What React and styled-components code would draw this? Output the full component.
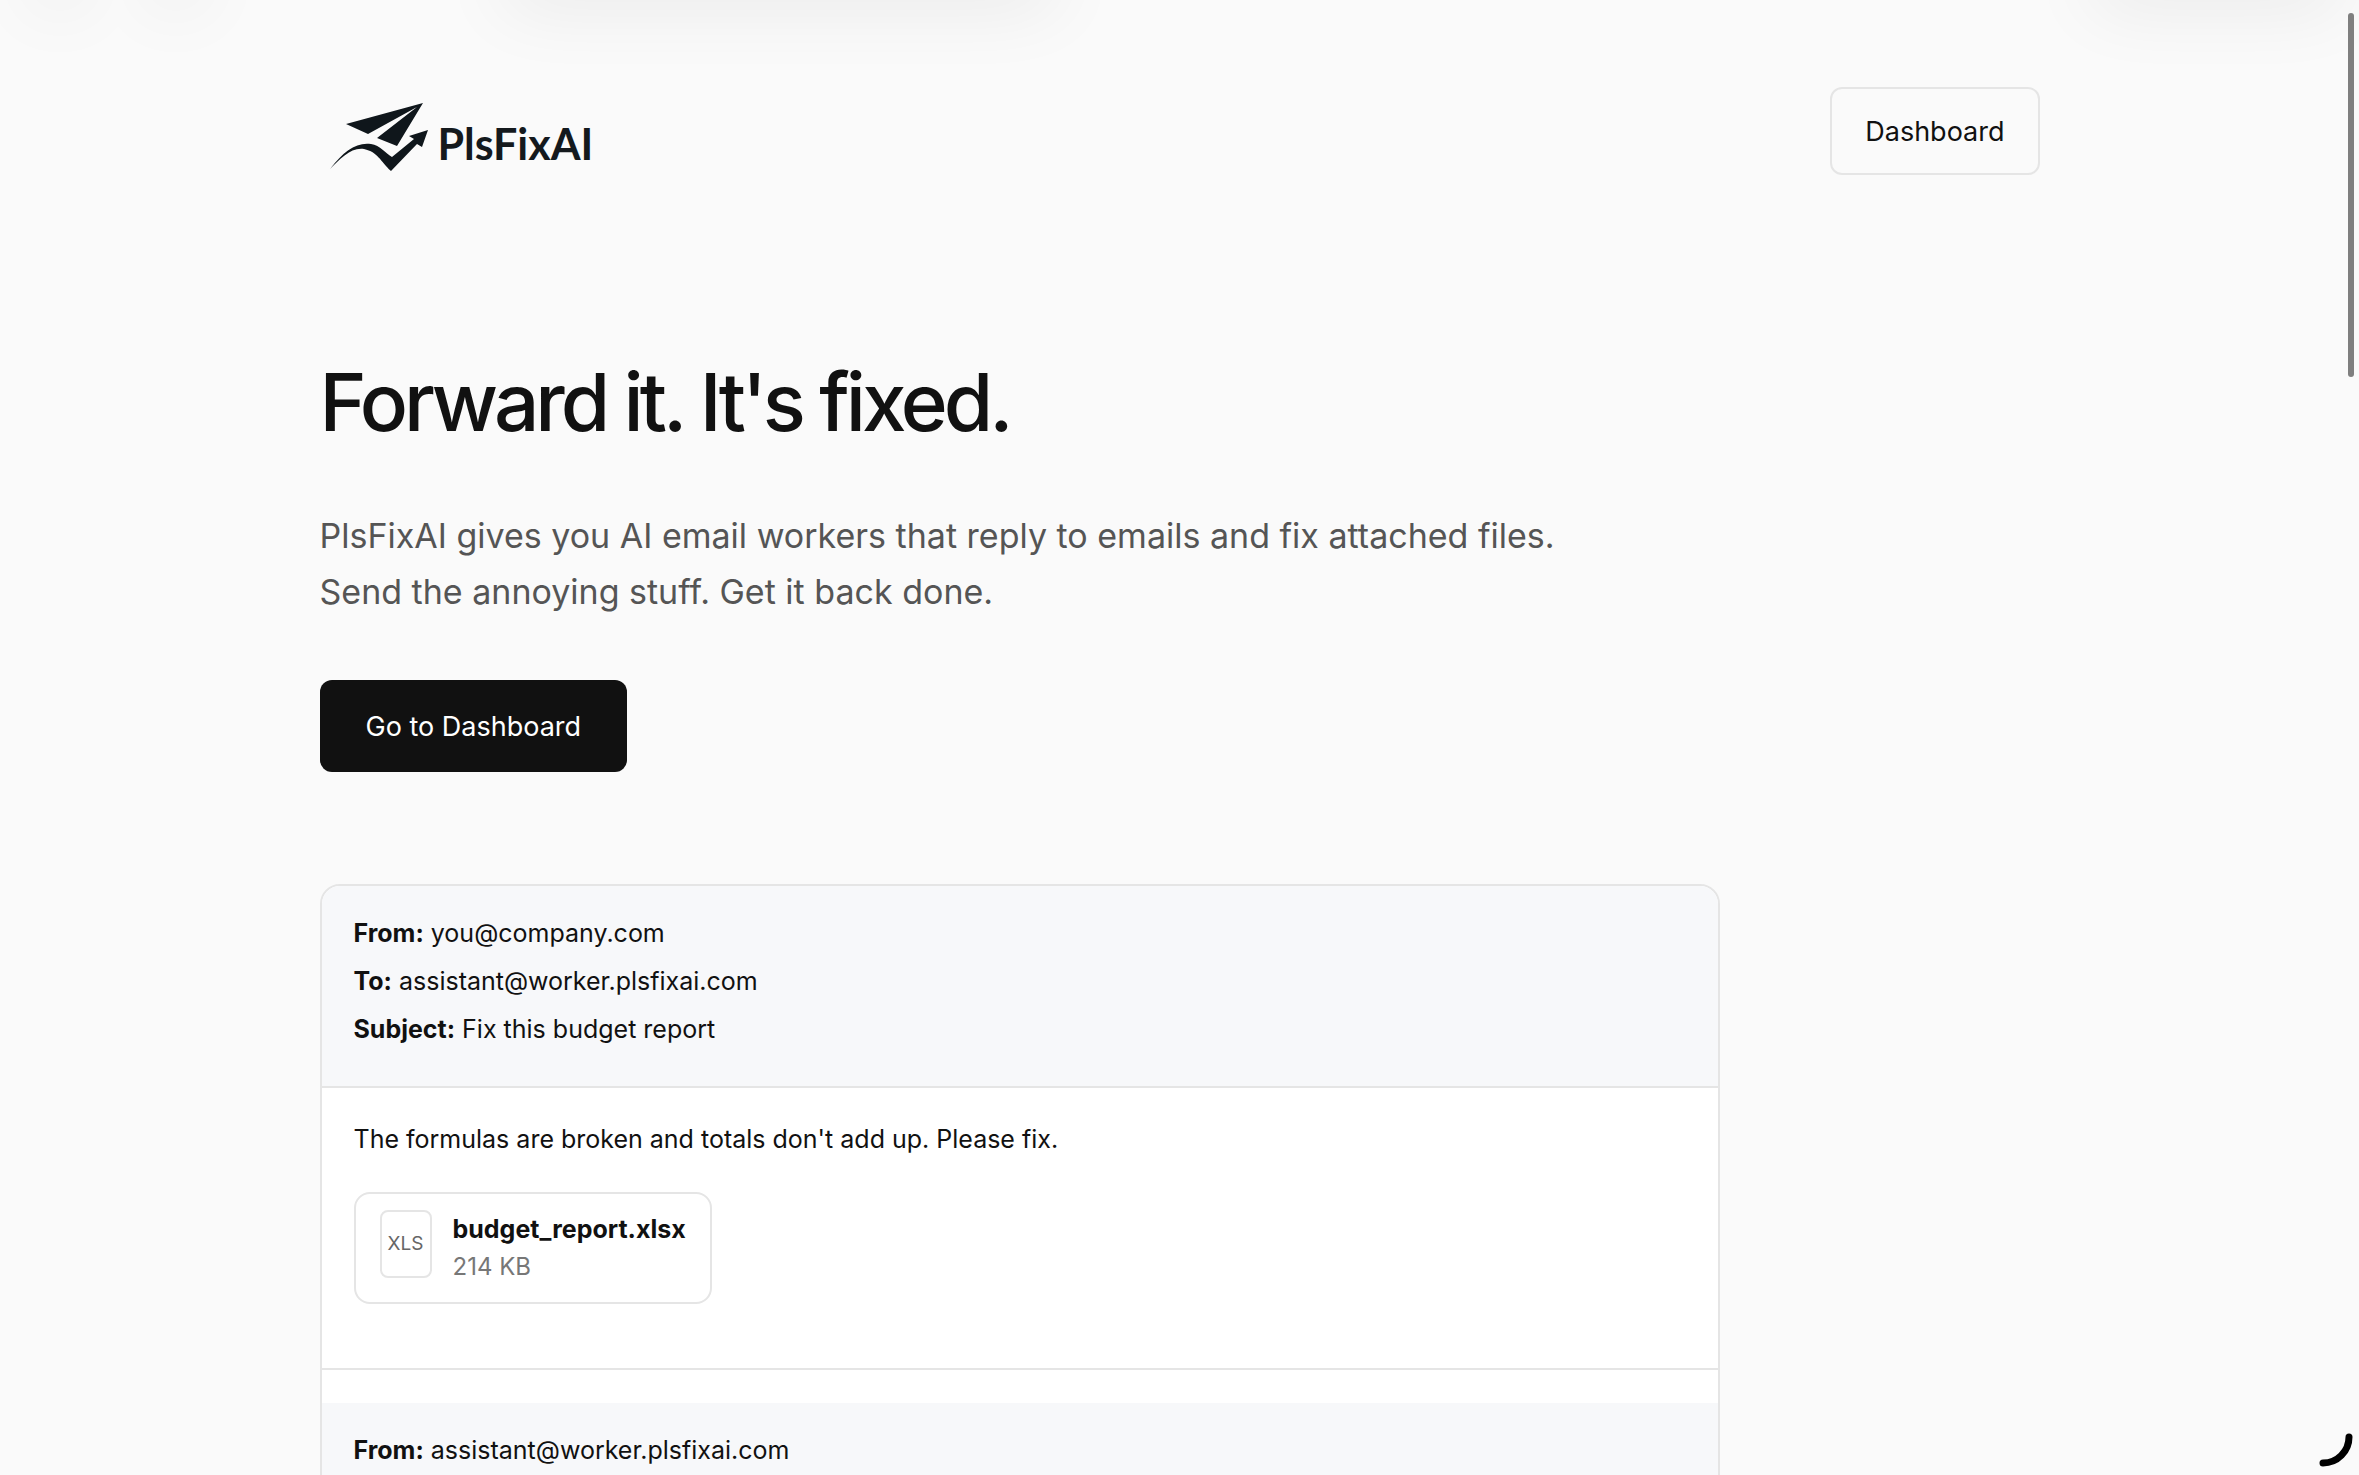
import styled, { createGlobalStyle } from "styled-components";

const emails = [
  {
    id: "request",
    headers: [
      { label: "From:", value: "you@company.com" },
      { label: "To:", value: "assistant@worker.plsfixai.com" },
      { label: "Subject:", value: "Fix this budget report" },
    ],
    message: "The formulas are broken and totals don't add up. Please fix.",
    file: { type: "XLS", name: "budget_report.xlsx", size: "214 KB" },
  },
  {
    id: "reply",
    headers: [{ label: "From:", value: "assistant@worker.plsfixai.com" }],
  },
];

function Logo() {
  return (
    <LogoLink href="/">
      <svg width="98" height="68" viewBox="0 0 98 68" aria-hidden="true">
        <path d="M93 0 16 21 38 31 87 4 47 35 67 43Z" />
        <path d="M0 66C14 48 26 39 41 41 50 42 56 51 62 54L84 36 79 33 98 27 92 44 87 41 61 68C50 58 48 49 34 46 21 44 10 56 0 66Z" />
      </svg>
      <span>PlsFixAI</span>
    </LogoLink>
  );
}

function Email({ email }) {
  const { headers, message, file } = email;
  return (
    <article>
      <EmailHeader>
        {headers.map((row) => (
          <HeaderRow key={row.label}>
            <strong>{row.label}</strong> {row.value}
          </HeaderRow>
        ))}
      </EmailHeader>
      {message && (
        <EmailBody>
          <p>{message}</p>
          <Attachment>
            <FileType>{file.type}</FileType>
            <FileInfo>
              <strong>{file.name}</strong>
              <span>{file.size}</span>
            </FileInfo>
          </Attachment>
        </EmailBody>
      )}
    </article>
  );
}

function App() {
  return (
    <>
      <GlobalStyle />
      <Page>
        <Container>
          <Header>
            <Logo />
            <OutlineButton type="button">Dashboard</OutlineButton>
          </Header>
          <main>
            <Hero>
              <h1>Forward it. It's fixed.</h1>
              <p>
                PlsFixAI gives you AI email workers that reply to emails and fix
                attached files. Send the annoying stuff. Get it back done.
              </p>
              <PrimaryButton type="button">Go to Dashboard</PrimaryButton>
            </Hero>
            <Thread>
              {emails.map((email) => (
                <Email email={email} key={email.id} />
              ))}
            </Thread>
          </main>
        </Container>
      </Page>
      {/* toolbar shadows */}
      <ToolbarShadow $left="30px" $width="60px" />
      <ToolbarShadow $left="146px" $width="60px" />
      <ToolbarShadow $left="500px" $width="560px" />
      <ToolbarShadow $right="14px" $width="256px" />
      <ScrollThumb />
      <CornerArc width="34" height="34" viewBox="0 0 34 34" aria-hidden="true">
        <path d="M30 4A26 26 0 0 1 4 30" />
      </CornerArc>
    </>
  );
}

const GlobalStyle = createGlobalStyle`
  * {
    margin: 0;
    padding: 0;
    box-sizing: border-box;
  }
  body {
    background: #fafafa;
    color: #111;
    font-family: Inter, "Liberation Sans", sans-serif;
  }
  button {
    font-family: inherit;
    cursor: pointer;
  }
`;

const Page = styled.div`
  height: 100vh;
  overflow-y: auto;
  scrollbar-width: none;
`;

const Container = styled.div`
  max-width: 1784px;
  margin: 0 auto;
  padding: 87px 32px 0;
`;

const Header = styled.header`
  display: flex;
  align-items: flex-start;
  justify-content: space-between;
`;

const LogoLink = styled.a`
  display: flex;
  align-items: center;
  gap: 10px;
  padding: 16px 10px;
  color: #14191d;
  font-family: Lato, sans-serif;
  font-size: 43px;
  font-weight: 700;
  line-height: 52px;
  text-decoration: none;
  svg {
    fill: #0f161b;
  }
  span {
    padding-top: 14px;
  }
`;

const OutlineButton = styled.button`
  height: 88px;
  padding: 0 33px;
  border: 2px solid #e5e5e5;
  border-radius: 12px;
  background: transparent;
  color: #111;
  font-size: 27px;
`;

const Hero = styled.section`
  max-width: 1400px;
  padding-top: 169px;
  h1 {
    font-size: 80px;
    font-weight: 500;
    line-height: 92px;
    letter-spacing: -0.05em;
  }
  p {
    max-width: 1270px;
    margin: 60px 0;
    color: #555;
    font-size: 34px;
    line-height: 56px;
  }
`;

const PrimaryButton = styled.button`
  height: 92px;
  padding: 0 46px;
  border: none;
  border-radius: 12px;
  background: #111;
  color: #fff;
  font-size: 27px;
`;

const Thread = styled.section`
  max-width: 1400px;
  margin-top: 112px;
  border: 2px solid #e5e5e5;
  border-radius: 20px;
  background: #fff;
  overflow: hidden;
  article + article {
    padding-top: 33px;
  }
`;

const EmailHeader = styled.div`
  padding: 26px 32px 30px;
  border-bottom: 2px solid #e5e5e5;
  background: #f7f8fa;
`;

const HeaderRow = styled.p`
  margin-bottom: 6px;
  font-size: 25px;
  line-height: 42px;
`;

const EmailBody = styled.div`
  padding: 30px 32px 64px;
  border-bottom: 2px solid #e5e5e5;
  font-size: 25px;
  line-height: 42px;
`;

const Attachment = styled.div`
  display: inline-flex;
  gap: 21px;
  margin-top: 32px;
  padding: 16px 24px;
  border: 2px solid #e5e5e5;
  border-radius: 16px;
  vertical-align: top;
`;

const FileType = styled.span`
  display: flex;
  align-items: center;
  justify-content: center;
  width: 52px;
  height: 68px;
  border: 2px solid #e5e5e5;
  border-radius: 8px;
  color: #666;
  font-size: 19px;
`;

const FileInfo = styled.div`
  display: flex;
  flex-direction: column;
  font-size: 24px;
  line-height: 38px;
  strong {
    font-size: 25px;
  }
  span {
    color: #777;
  }
`;

const ToolbarShadow = styled.div`
  position: fixed;
  top: -60px;
  left: ${(props) => props.$left};
  right: ${(props) => props.$right};
  width: ${(props) => props.$width};
  height: 50px;
  border-radius: 25px;
  box-shadow: 0 16px 72px rgba(0, 0, 0, 0.08);
  pointer-events: none;
`;

const ScrollThumb = styled.div`
  position: fixed;
  top: 13px;
  right: 5px;
  width: 6px;
  height: 364px;
  border-radius: 3px;
  background: #7f7f7f;
`;

const CornerArc = styled.svg`
  position: fixed;
  right: 6px;
  bottom: 8px;
  fill: none;
  stroke: #000;
  stroke-width: 7;
  stroke-linecap: round;
`;

export default App;
